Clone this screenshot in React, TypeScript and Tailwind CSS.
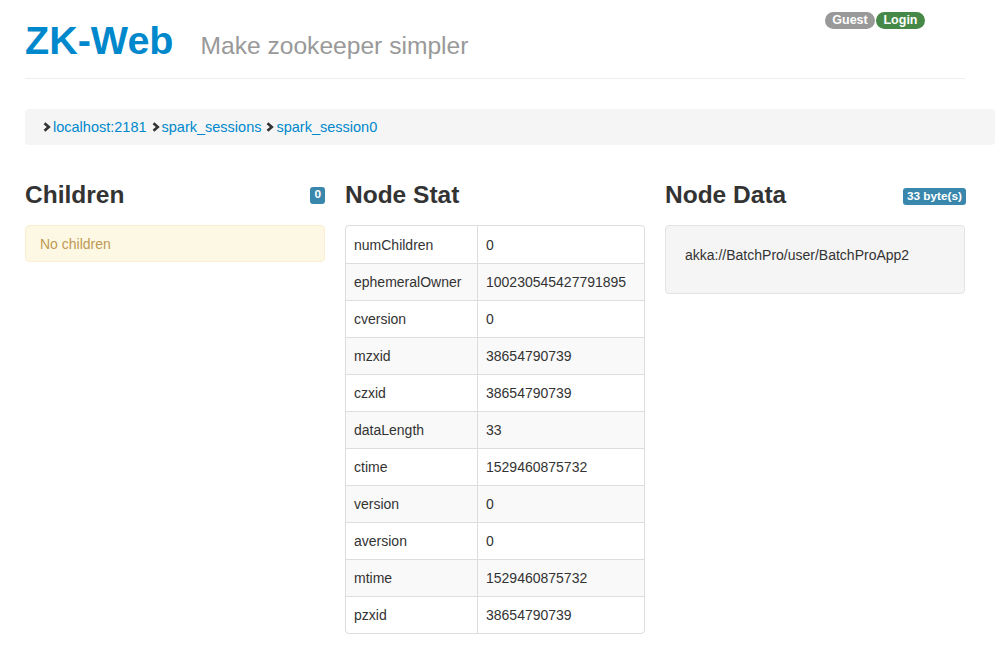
const stats: [string, string][] = [
  ["numChildren", "0"],
  ["ephemeralOwner", "100230545427791895"],
  ["cversion", "0"],
  ["mzxid", "38654790739"],
  ["czxid", "38654790739"],
  ["dataLength", "33"],
  ["ctime", "1529460875732"],
  ["version", "0"],
  ["aversion", "0"],
  ["mtime", "1529460875732"],
  ["pzxid", "38654790739"],
];

const crumbs = ["localhost:2181", "spark_sessions", "spark_session0"];

function Chevron() {
  return (
    <svg width="8" height="10" viewBox="0 0 8 10" className="mr-[2px] shrink-0">
      <path d="M1.5 1.2 L5.8 5 L1.5 8.8" fill="none" stroke="#333" strokeWidth="2.6" strokeLinejoin="miter" />
    </svg>
  );
}

function Badge({ children }: { children: React.ReactNode }) {
  return (
    <span className="inline-flex h-[17px] items-center rounded-[3px] bg-[#3a87ad] px-[4px] text-[11.8px] font-bold leading-none text-white">
      {children}
    </span>
  );
}

export default function App() {
  return (
    <div className="min-h-[660px] bg-white text-[14px] leading-[20px] text-[#333]" style={{ fontFamily: '"Liberation Sans", Arial, sans-serif' }}>
      <div className="ml-[25px] w-[940px]">
        <div className="flex items-start justify-between border-b border-[#eee] pt-[12px] pb-[18px]">
          <h1 className="mt-[8px] flex h-[40px] items-baseline leading-[40px]">
            <span className="text-[39.5px] font-bold text-[#0088cc]">ZK-Web</span>
            <span className="ml-[27px] text-[24.6px] text-[#999]">Make zookeeper simpler</span>
          </h1>
          <div className="mr-[40px] flex">
            <span className="inline-flex h-[17px] w-[50px] items-center justify-center rounded-full bg-[#999] text-[12.5px] font-bold leading-none text-white">Guest</span>
            <span className="ml-[1px] inline-flex h-[17px] w-[49px] items-center justify-center rounded-full bg-[#468847] text-[12.5px] font-bold leading-none text-white">Login</span>
          </div>
        </div>

        <div className="mt-[30px] flex h-[36px] w-[970px] items-center rounded-[4px] bg-[#f5f5f5] pl-[18px] text-[14.5px]">
          {crumbs.map((c) => (
            <span key={c} className="mr-[5px] flex items-center">
              <Chevron />
              <a className="text-[#0088cc]" href="#">{c}</a>
            </span>
          ))}
        </div>

        <div className="mt-[30px] grid grid-cols-3 gap-x-[20px]">
          <section>
            <div className="mb-[10px] flex h-[40px] items-center justify-between">
              <h3 className="text-[24.5px] font-bold">Children</h3>
              <Badge>0</Badge>
            </div>
            <div className="flex h-[37px] items-center rounded-[4px] border border-[#fbeed5] bg-[#fcf8e3] pl-[14px] text-[#c09853]">
              No children
            </div>
          </section>

          <section>
            <div className="mb-[10px] flex h-[40px] items-center">
              <h3 className="text-[24.5px] font-bold">Node Stat</h3>
            </div>
            <table className="w-[300px] border-separate border-spacing-0 rounded-[4px] border border-[#ddd]">
              <tbody>
                {stats.map(([k, v], i) => (
                  <tr key={k} className={i % 2 === 1 ? "bg-[#f9f9f9]" : ""}>
                    <td className={`h-[37px] w-[132px] border-r border-[#ddd] px-[8px] ${i > 0 ? "border-t" : ""}`}>{k}</td>
                    <td className={`h-[37px] border-[#ddd] px-[8px] ${i > 0 ? "border-t" : ""}`}>{v}</td>
                  </tr>
                ))}
              </tbody>
            </table>
          </section>

          <section>
            <div className="mb-[10px] flex h-[40px] items-center justify-between">
              <h3 className="text-[24.5px] font-bold">Node Data</h3>
              <span className="-mr-[1px]"><Badge>33 byte(s)</Badge></span>
            </div>
            <div className="h-[69px] rounded-[4px] border border-[#e3e3e3] bg-[#f5f5f5] pt-[19px] pl-[19px]">
              akka://BatchPro/user/BatchProApp2
            </div>
          </section>
        </div>
      </div>
    </div>
  );
}
